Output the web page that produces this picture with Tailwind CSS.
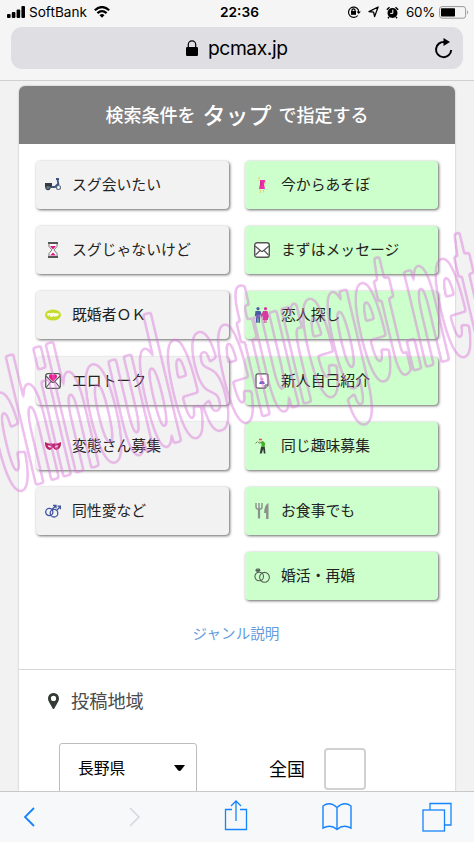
<!DOCTYPE html>
<html lang="ja">
<head>
<meta charset="utf-8">
<title>pcmax.jp</title>
<script src="https://cdn.jsdelivr.net/npm/@tailwindcss/browser@4"></script>
</head>
<body class="bg-[#f2f2f2]">
<div class="relative flex h-[842px] w-[474px] flex-col overflow-hidden bg-[#f2f2f2] font-['Inter','Noto_Sans_CJK_JP',sans-serif] text-black">
  <header class="h-[81px] shrink-0 border-b border-[#cfcfd1] bg-[#f6f5f6]">
    <div class="grid h-6 grid-cols-3 items-center pl-[7px] pr-[5px] text-[13.3px] leading-6">
      <div class="flex items-center">
        <svg class="mr-1" width="18" height="12" viewBox="0 0 18 12"><rect y="8" width="3.6" height="4" rx="1"/><rect x="4.8" y="6" width="3.6" height="6" rx="1"/><rect x="9.6" y="3.4" width="3.6" height="8.6" rx="1"/><rect x="14.4" width="3.6" height="12" rx="1"/></svg>
        <span class="w-[58px] whitespace-nowrap font-['Inter'] text-[13.6px]">SoftBank</span>
        <svg class="ml-[7px]" width="16" height="12" viewBox="0 0 16 12" fill="none" stroke="#000" stroke-width="2.2"><path d="M.8 4.3Q8-2.2 15.2 4.3M3.4 7.1q4.6-4.1 9.2 0"/><path d="M5.5 9.2q2.5-2.2 5 0L8 11.8z" fill="#000" stroke="none"/></svg>
      </div>
      <div class="pl-[3px] text-center text-[13.7px] font-semibold">22:36</div>
      <div class="flex items-center justify-end">
        <svg class="mr-[7px]" width="14" height="14" viewBox="0 0 14 14" fill="none" stroke="#000" stroke-width="1.2"><path d="M10.8 10.5A5.2 5.2 0 1 1 11.2 4.6L11.7 7"/><path d="M9.5 6.4h4.4L11.7 9z" fill="#000" stroke="none"/><rect x="4" y="6" width="5" height="3.8" fill="#000" stroke="none"/><path d="M5 6V4.8q1.5-2 3 0V6"/></svg>
        <svg class="mr-[7px]" width="11" height="12" viewBox="0 0 11 12" fill="none" stroke="#000" stroke-width="1.3" stroke-linejoin="round"><path d="M10.1 1 6.6 10.6 5.6 6.2 1 5.6z"/></svg>
        <svg class="mr-[7px]" width="13" height="13" viewBox="0 0 13 13"><circle cx="6.5" cy="7" r="5"/><path d="M.8 3.7 3.5 1.3M12.2 3.7 9.5 1.3M3 11l-1 1.3M10 11l1 1.3" stroke="#000" stroke-width="1.5"/><path d="M6.8 3.7v3.7H4.2" fill="none" stroke="#fff"/></svg>
        <span class="mr-[4px] w-[29px] whitespace-nowrap text-[13.4px] tracking-[-.3px]">60%</span>
        <svg width="30" height="13" viewBox="0 0 30 13"><rect x=".6" y=".6" width="26" height="11.6" rx="2.5" fill="none" stroke="#999"/><rect x="2" y="2.2" width="14" height="8.4" rx=".8"/><path d="M28 4.3q2 2 0 4.2z" fill="#999"/></svg>
      </div>
    </div>
    <div class="ml-[11px] mt-[3px] flex h-[42px] w-[452px] items-center rounded-[11px] bg-[#dfdfe3]">
      <svg class="ml-[175px]" width="12" height="16" viewBox="0 0 12 16"><rect y="7" width="12" height="9" rx="1.3"/><path d="M2.3 8V4.5a3.7 3.7 0 0 1 7.4 0V8" fill="none" stroke="#000" stroke-width="1.2"/></svg>
      <span class="ml-[10px] text-[19.3px] leading-[40px] tracking-[-.45px]">pcmax.jp</span>
      <svg class="ml-auto mr-[10px]" width="19" height="21" viewBox="0 0 19 21"><path d="M10.5 4A7.6 7.6 0 1 0 17.2 12" fill="none" stroke="#000" stroke-width="2"/><path d="M9.5 0 16 4 9.5 8z"/></svg>
    </div>
  </header>

  <main class="ml-[19px] mt-[5px] flex h-[705px] w-[436px] shrink-0 flex-col overflow-hidden rounded-t-[6px] bg-white shadow-[0_0_2px_rgba(0,0,0,.3)] font-['Noto_Sans_CJK_JP',sans-serif]">
    <h1 class="flex h-[57.5px] shrink-0 items-center justify-center bg-[#7f7f7f] pb-px text-[18px] font-medium text-white"><span>検索条件を</span><span class="mx-[7px] text-[23px]">タップ</span><span>で指定する</span></h1>
    <div class="mt-[17.5px] flex justify-between pl-[17px] pr-[17px] text-[14.85px] leading-[22px] text-[#222] [&_span]:pb-[2px]">
      <div class="flex w-[192.5px] flex-col gap-[17.2px]">
        <div class="flex h-[48px] items-center gap-[11px] rounded-[4px] bg-[#f2f2f2] pl-[9px] shadow-[1px_1px_3px_rgba(0,0,0,.6)]">
          <svg width="16" height="16" viewBox="0 0 16 16"><path d="M0 6h7v4H0z" fill="#333b48"/><circle cx="3" cy="10.5" r="2.3" fill="#5f7888" stroke="#333"/><circle cx="13.5" cy="10.5" r="2" fill="#fff" stroke="#667780" stroke-width="1.2"/><path d="M11 2h3M12.5 2l1 6M6 10h4l3-3" fill="none" stroke="#3d577f" stroke-width="1.8"/></svg>
          <span>スグ会いたい</span></div>
        <div class="flex h-[48px] items-center gap-[11px] rounded-[4px] bg-[#f2f2f2] pl-[9px] shadow-[1px_1px_3px_rgba(0,0,0,.6)]">
          <svg width="16" height="16" viewBox="0 0 16 16"><path d="M4 1.5v3L7 8l-3 3.5v3h8v-3L9 8l3-3.5v-3z" fill="#fff" stroke="#777"/><path d="M5 4h6L8 7.5zM5 13.5l3-3 3 3z" fill="#d91b82"/><path d="M3 1h10M3 15h10" stroke="#555" stroke-width="2"/></svg>
          <span>スグじゃないけど</span></div>
        <div class="flex h-[48px] items-center gap-[11px] rounded-[4px] bg-[#f2f2f2] pl-[9px] shadow-[1px_1px_3px_rgba(0,0,0,.6)]">
          <svg width="16" height="16" viewBox="0 0 16 16"><ellipse cx="8" cy="8" rx="8" ry="5.6" fill="#c7dc2a"/><path d="M2 7.5q1-2 3-1.2 3-1.3 6 0 3-.6 3 1-1.5 2.7-6 2.5-5 0-6-2.3" fill="#fbfde8"/><path d="M4 8l1 1.2M8 9l1 1" stroke="#c7dc2a"/></svg>
          <span>既婚者ＯＫ</span></div>
        <div class="flex h-[48px] items-center gap-[11px] rounded-[4px] bg-[#f2f2f2] pl-[9px] shadow-[1px_1px_3px_rgba(0,0,0,.6)]">
          <svg width="16" height="16" viewBox="0 0 16 16"><rect x=".7" y=".7" width="14.6" height="14.6" rx="2.4" fill="#fff" stroke="#555" stroke-width="1.3"/><path d="M1 3l6 6q1 .8 2 0l6-6M1.5 14 6 8.5M14.5 14 10 8.5" fill="none" stroke="#555" stroke-width="1.1"/><path d="M8 8.5 4.3 4.8C2.8 2 6 .2 8 2.2c2-2 5.2-.2 3.7 2.6z" fill="#ee168b"/></svg>
          <span>エロトーク</span></div>
        <div class="flex h-[48px] items-center gap-[11px] rounded-[4px] bg-[#f2f2f2] pl-[9px] shadow-[1px_1px_3px_rgba(0,0,0,.6)]">
          <svg width="16" height="16" viewBox="0 0 16 16"><path fill-rule="evenodd" d="M0 4q4 2 5 1.5Q8 5 8 6.3 8 5 11 5.5 12 6 16 4q.5 7-4.5 8Q9 12 8 9.6 7 12 4.5 12-.5 11 0 4zm2.6 3.6q1.3 3 4 1.3Q5.5 6.8 2.6 7.6m10.8 0q-2.9-.8-4 1.3 2.7 1.7 4-1.3" fill="#bd2367"/></svg>
          <span>変態さん募集</span></div>
        <div class="flex h-[48px] items-center gap-[11px] rounded-[4px] bg-[#f2f2f2] pl-[9px] shadow-[1px_1px_3px_rgba(0,0,0,.6)]">
          <svg width="16" height="16" viewBox="0 0 16 16" fill="none" stroke="#4055a0" stroke-width="1.3"><circle cx="4.3" cy="9" r="3.6"/><circle cx="9" cy="10.2" r="3.8"/><path d="M7 6.5 10.4 3M8 2.3h3v3M11.7 7.3l3.5-3.5M12.5 3.2h3v3"/></svg>
          <span>同性愛など</span></div>
      </div>
      <div class="flex w-[193px] flex-col gap-[17.2px]">
        <div class="flex h-[48px] items-center gap-[11px] rounded-[4px] bg-[#ccffcb] pl-[9px] shadow-[1px_1px_3px_rgba(0,0,0,.6)]">
          <svg width="16" height="16" viewBox="0 0 16 16"><path d="M6 3h5v2L10 7l1 5H5l1-5z" fill="#f02fa7"/><path d="M5 .5v3M11.3 4.3v3M6.5 13v3M9.5 13v2.5" stroke="#e3c849" stroke-width="1.2" stroke-dasharray="1.5 .7"/><path d="M7 4.5v4" stroke="#a92c7e"/></svg>
          <span>今からあそぼ</span></div>
        <div class="flex h-[48px] items-center gap-[11px] rounded-[4px] bg-[#ccffcb] pl-[9px] shadow-[1px_1px_3px_rgba(0,0,0,.6)]">
          <svg width="16" height="16" viewBox="0 0 16 16"><rect x=".7" y=".7" width="14.6" height="14.6" rx="2.4" fill="#fff" stroke="#555" stroke-width="1.4"/><path d="M1 4l6 5q1 .8 2 0l6-5M1.5 13 6 8.5M14.5 13 10 8.5" fill="none" stroke="#555" stroke-width="1.2"/></svg>
          <span>まずはメッセージ</span></div>
        <div class="flex h-[48px] items-center gap-[11px] rounded-[4px] bg-[#ccffcb] pl-[9px] shadow-[1px_1px_3px_rgba(0,0,0,.6)]">
          <svg width="16" height="16" viewBox="0 0 16 16"><g fill="#495da2"><circle cx="4" cy="1.7" r="1.6"/><path d="M1.5 4h5l2 6-1 .5-1.5-3v8.3H4.3V11h-.6v4.8H2V9H.8z"/></g><g fill="#d83b9d"><circle cx="11.5" cy="1.7" r="1.6"/><path d="M9 4h4.5l1.5 6-1 1v2h-1.5v3h-1v-3h-.8v3h-1v-3H8.5l.7-4.5L7.5 10 7 9z"/></g></svg>
          <span>恋人探し</span></div>
        <div class="flex h-[48px] items-center gap-[11px] rounded-[4px] bg-[#ccffcb] pl-[9px] shadow-[1px_1px_3px_rgba(0,0,0,.6)]">
          <svg width="16" height="16" viewBox="0 0 16 16"><path d="M4 .8h8q2 0 2 2v9.4l-3 3H4q-2 0-2-2V2.8q0-2 2-2z" fill="#fff" stroke="#555" stroke-width="1.2"/><path d="M11 15v-3h3" fill="#eee" stroke="#555"/><circle cx="8" cy="6" r="1.5" fill="#eab2ca"/><path d="M5.3 11q0-3 2.7-3t2.7 3z" fill="#555fc4"/><path d="m7 8 1 2 1-2" fill="#ec2f93"/></svg>
          <span>新人自己紹介</span></div>
        <div class="flex h-[48px] items-center gap-[11px] rounded-[4px] bg-[#ccffcb] pl-[9px] shadow-[1px_1px_3px_rgba(0,0,0,.6)]">
          <svg width="16" height="16" viewBox="0 0 16 16"><circle cx="6.5" cy="2.3" r="1.6" fill="#edc39b"/><path d="M5 1.3h3" stroke="#d33"/><path d="M5.5 4.5 9 3l2 2-.3 4.5H7l.7-3.5z" fill="#46a930"/><path d="M7 9h3.8l.7 6.5H9.8L9.2 11l-1.5 4.5H5.8z" fill="#333b38"/><path d="M1.5 5.5 3.5 3.5M4 4 6 5.5" stroke="#698557"/></svg>
          <span>同じ趣味募集</span></div>
        <div class="flex h-[48px] items-center gap-[11px] rounded-[4px] bg-[#ccffcb] pl-[9px] shadow-[1px_1px_3px_rgba(0,0,0,.6)]">
          <svg width="16" height="16" viewBox="0 0 16 16"><path d="M2 0v4q0 2.3 3 2.3T8 4V0M5 0v6" fill="none" stroke="#8c8f8c" stroke-width="1.4"/><path d="M5 6v9.5" stroke="#8c8f8c" stroke-width="2.2"/><path d="M14.5 0v16h-2.4V10h-2Q10.3 2 14.5 0z" fill="#8c8f8c"/></svg>
          <span>お食事でも</span></div>
        <div class="flex h-[48px] items-center gap-[11px] rounded-[4px] bg-[#ccffcb] pl-[9px] shadow-[1px_1px_3px_rgba(0,0,0,.6)]">
          <svg width="16" height="16" viewBox="0 0 16 16" fill="none" stroke="#536252" stroke-width="1.1"><circle cx="5.2" cy="8.5" r="4.3"/><circle cx="10.5" cy="9.3" r="4.9"/><path d="M1.8 2.3 3 1h2l1 1.3-2.1 2zM2 2.4h4"/></svg>
          <span>婚活・再婚</span></div>
      </div>
    </div>
    <div class="mt-[22px] text-center text-[14.6px] leading-[22px] text-[#649ce0]"><span class="mr-[2px]">ジャンル説明</span></div>
    <section class="mt-[24.5px] border-t border-[#d8d8d8]">
      <div class="flex h-[63px] items-center pl-[29px] text-[18.2px] leading-[27px] text-[#4b4b4b]">
        <svg class="mr-[13px]" width="11" height="16" viewBox="0 0 11 16"><path fill-rule="evenodd" d="M5.5 0A5.3 5.3 0 0 1 11 5.4Q11 7 10 9l-4 7H5L1 9Q0 7 0 5.4A5.3 5.3 0 0 1 5.5 0zm0 2.8a2.6 2.6 0 1 0 0 5.2 2.6 2.6 0 0 0 0-5.2z" fill="#343a34"/></svg>
        <h2 class="-ml-px pb-[2px]">投稿地域</h2>
      </div>
      <div class="flex items-start pl-[40px] pt-[10px]">
        <div class="flex h-[51px] w-[138px] items-center rounded-[3px] border border-[#bdbdbd] pl-[18px] pr-[11px] text-[15.8px]"><span>長野県</span><svg class="ml-auto" width="11" height="6" viewBox="0 0 11 6"><path d="M0 0h11L7 5.2q-1.5 1.4-3 0z"/></svg></div>
        <span class="ml-[72px] mt-[11px] text-[18px] leading-[28px]">全国</span>
        <span class="ml-[19px] mt-[5px] size-[42px] rounded-[4px] border-2 border-[#d1d1d1]"></span>
      </div>
    </section>
  </main>

  <svg class="pointer-events-none absolute left-0 top-0" width="474" height="842" viewBox="0 0 474 842">
    <filter id="outline" filterUnits="userSpaceOnUse" x="-40" y="180" width="560" height="360" color-interpolation-filters="sRGB">
      <feGaussianBlur in="SourceAlpha" stdDeviation=".9" result="soft"/>
      <feComponentTransfer in="soft" result="outer"><feFuncA type="linear" slope="5" intercept="-.1"/></feComponentTransfer>
      <feComponentTransfer in="soft" result="inner"><feFuncA type="linear" slope="5" intercept="-3.6"/></feComponentTransfer>
      <feComposite in="outer" in2="inner" operator="out" result="ring"/>
      <feFlood flood-color="#d96fd9" flood-opacity=".44"/>
      <feComposite in2="ring" operator="in"/>
    </filter>
    <g filter="url(#outline)">
      <g transform="translate(8 491) rotate(-16.8) skewX(-3.5) scale(.285 1)">
        <text x="0" y="0" textLength="1770" lengthAdjust="spacingAndGlyphs" font-family="Liberation Sans" font-weight="700" font-size="176" stroke="#000" stroke-width="4">chihoudesefureget.net</text>
      </g>
    </g>
  </svg>

  <nav class="relative flex h-[51px] shrink-0 items-center border-t border-[#c8c8ca] bg-[#f6f8fa] pl-[23px] text-[#1683fd]">
    <svg width="12" height="20" viewBox="0 0 12 20" fill="none" stroke="currentColor" stroke-width="1.8"><path d="M11 1 2 10l9 9"/></svg>
    <svg class="ml-[94px]" width="12" height="20" viewBox="0 0 12 20" fill="none" stroke="#d5d7da" stroke-width="1.5"><path d="m1 1 9 9-9 9"/></svg>
    <svg class="-mt-1 ml-[83px]" width="24" height="32" viewBox="0 0 24 32" fill="none" stroke="currentColor" stroke-width="1.3"><path d="M8 10.5H1.5v20h21v-20H16M12 22V2M7 7l5-5 5 5"/></svg>
    <svg class="ml-[74px]" width="30" height="28" viewBox="0 0 30 28" fill="none" stroke="currentColor" stroke-width="1.4"><path d="M15 4.5Q8-2 1 3v22q8-4 14 1.5Q21 21 29 25V3Q22-2 15 4.5zV27"/></svg>
    <svg class="ml-[70px]" width="30" height="30" viewBox="0 0 30 30" fill="none" stroke="currentColor" stroke-width="1.3"><rect x="1" y="8" width="21.5" height="21"/><path d="M8 8V1.5h21V23h-6"/></svg>
  </nav>
</div>
</body>
</html>
